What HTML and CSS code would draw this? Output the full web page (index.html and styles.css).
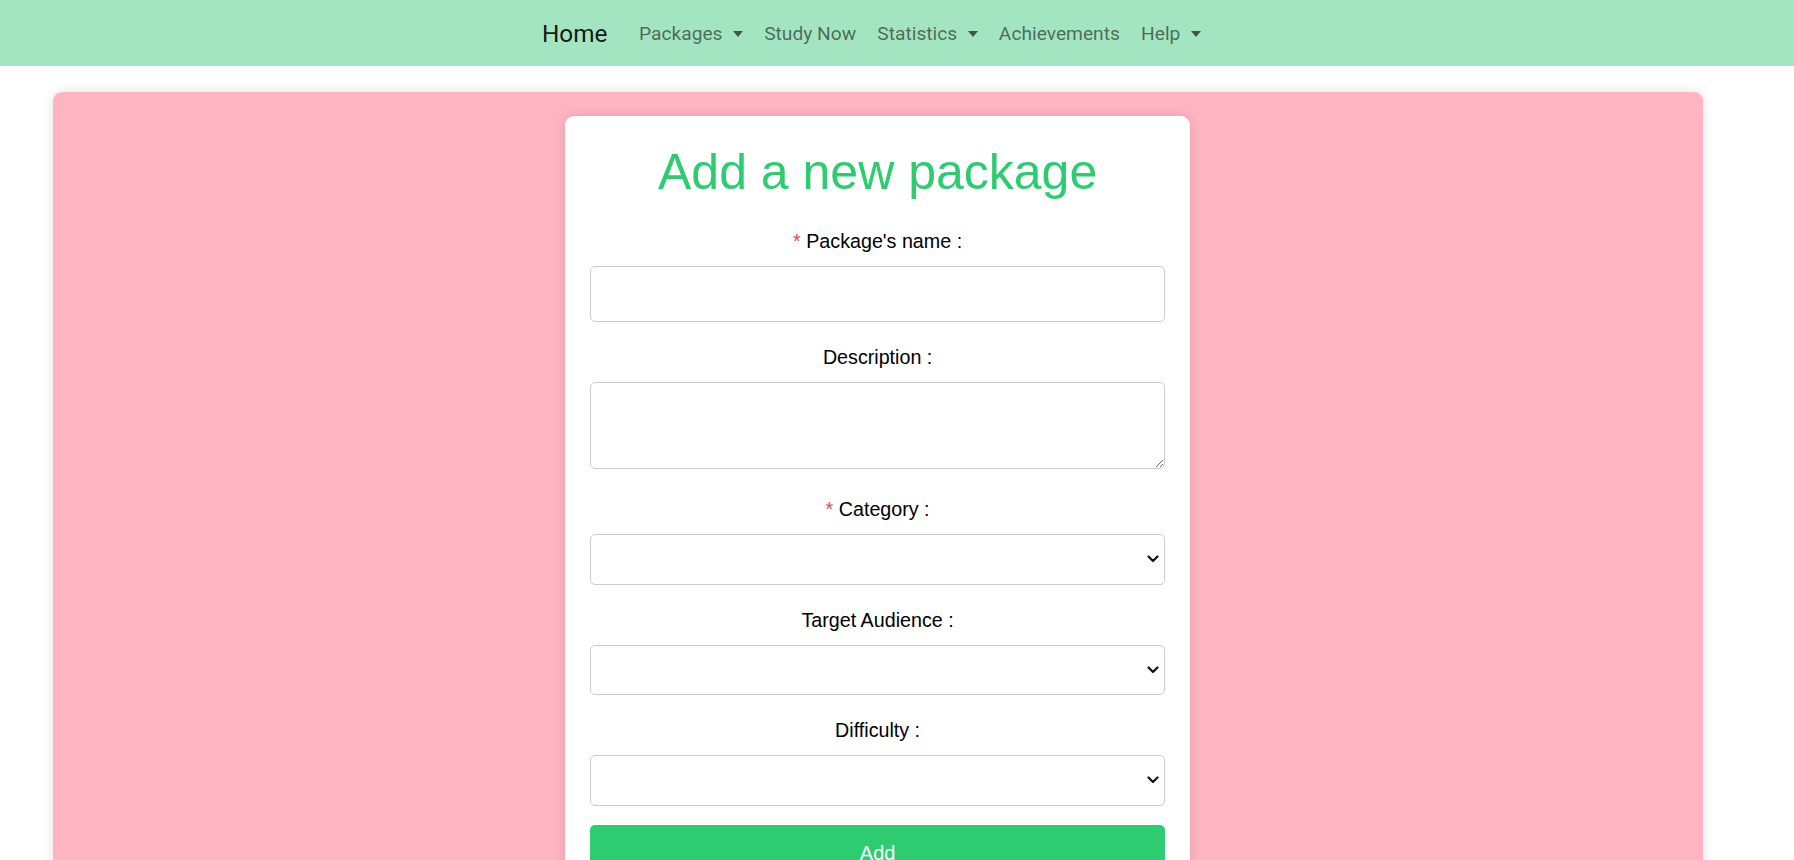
FILE: index.html
```html
<!DOCTYPE html>
<html lang="en">
<head>
<meta charset="utf-8">
<title>Add a new package</title>
<link rel="stylesheet" href="styles.css">
</head>
<body>
<nav class="navbar">
  <a class="brand" href="#">Home</a>
  <ul class="nav">
    <li><a class="nav-link dropdown" href="#">Packages</a></li>
    <li><a class="nav-link" href="#">Study Now</a></li>
    <li><a class="nav-link dropdown" href="#">Statistics</a></li>
    <li><a class="nav-link" href="#">Achievements</a></li>
    <li><a class="nav-link dropdown" href="#">Help</a></li>
  </ul>
</nav>
<main class="panel">
  <section class="card">
    <h1 class="title">Add a new package</h1>
    <form class="form">
      <div class="field">
        <label class="label"><span class="req">*</span> Package's name :</label>
        <input class="control control-input" type="text">
      </div>
      <div class="field field-area">
        <label class="label">Description :</label>
        <textarea class="control control-area"></textarea>
      </div>
      <div class="field">
        <label class="label"><span class="req">*</span> Category :</label>
        <div class="select-wrap">
          <select class="control control-select"><option></option></select>
          <svg class="chevron" width="12" height="8" viewBox="0 0 12 8"><path d="M1.5 1.5 L6 6 L10.5 1.5" fill="none" stroke="#111" stroke-width="2.2" stroke-linecap="round" stroke-linejoin="round"/></svg>
        </div>
      </div>
      <div class="field">
        <label class="label">Target Audience :</label>
        <div class="select-wrap">
          <select class="control control-select"><option></option></select>
          <svg class="chevron" width="12" height="8" viewBox="0 0 12 8"><path d="M1.5 1.5 L6 6 L10.5 1.5" fill="none" stroke="#111" stroke-width="2.2" stroke-linecap="round" stroke-linejoin="round"/></svg>
        </div>
      </div>
      <div class="field">
        <label class="label">Difficulty :</label>
        <div class="select-wrap">
          <select class="control control-select"><option></option></select>
          <svg class="chevron" width="12" height="8" viewBox="0 0 12 8"><path d="M1.5 1.5 L6 6 L10.5 1.5" fill="none" stroke="#111" stroke-width="2.2" stroke-linecap="round" stroke-linejoin="round"/></svg>
        </div>
      </div>
      <button class="btn" type="button">Add</button>
    </form>
  </section>
</main>
</body>
</html>
```

FILE: styles.css
```css
* { box-sizing: border-box; }

body {
  margin: 0;
  background: #ffffff;
  font-family: "Liberation Sans", Arial, sans-serif;
  color: #000;
}

.navbar {
  height: 66px;
  background: #a3e4c1;
  display: flex;
  align-items: center;
  padding-left: 542px;
  padding-top: 1px;
  font-family: Roboto, "Noto Sans", sans-serif;
}

.brand {
  font-size: 24.3px;
  color: rgba(0, 0, 0, 0.9);
  text-decoration: none;
  margin-right: 21px;
  line-height: 30px;
}

.nav {
  list-style: none;
  margin: 0;
  padding: 0;
  display: flex;
  align-items: center;
}

.nav-link {
  display: flex;
  align-items: center;
  padding: 0 10.6px;
  font-size: 19.2px;
  line-height: 28px;
  color: rgba(0, 0, 0, 0.55);
  text-decoration: none;
}

.dropdown::after {
  content: "";
  display: inline-block;
  margin-left: 10.5px;
  border-top: 6.5px solid rgba(0, 0, 0, 0.62);
  border-left: 5.5px solid transparent;
  border-right: 5.5px solid transparent;
  margin-top: 1px;
}

.panel {
  margin: 25.5px 0 0 52.6px;
  width: 1650px;
  min-height: 900px;
  background: #ffb5c1;
  border-radius: 9px;
  box-shadow: 0 0 12px rgba(0, 0, 0, 0.12);
  padding-top: 24px;
}

.card {
  width: 625px;
  margin: 0 auto;
  background: #fff;
  border-radius: 9px;
  box-shadow: 0 0 12px rgba(0, 0, 0, 0.12);
  padding: 26px 25px 40px;
  min-height: 800px;
}

.title {
  margin: 0 0 28.4px;
  font-size: 50px;
  line-height: 60px;
  font-weight: 400;
  color: #2ecc71;
  text-align: center;
}

.field {
  margin-bottom: 24px;
}

.field-area {
  margin-bottom: 29.5px;
}

.field:last-of-type {
  margin-bottom: 19.5px;
}

.label {
  display: block;
  text-align: center;
  font-size: 19.7px;
  line-height: 23px;
  margin-bottom: 13px;
}

.req {
  color: #e8464f;
}

.control {
  display: block;
  width: 100%;
  border: 1px solid #cbcbcb;
  border-radius: 5px;
  background: #fff;
  font-family: "Liberation Sans", Arial, sans-serif;
  font-size: 18px;
  outline: none;
}

.control-input {
  height: 56px;
}

.control-area {
  height: 87px;
  resize: vertical;
}

.select-wrap {
  position: relative;
}

.control-select {
  height: 50.4px;
  appearance: none;
  -webkit-appearance: none;
}

.chevron {
  position: absolute;
  right: 6px;
  top: 21px;
  pointer-events: none;
}

.btn {
  display: block;
  width: 100%;
  height: 57px;
  border: none;
  border-radius: 5px;
  background: #2ecc71;
  color: #fff;
  font-family: "Liberation Sans", Arial, sans-serif;
  font-size: 20px;
}
```
